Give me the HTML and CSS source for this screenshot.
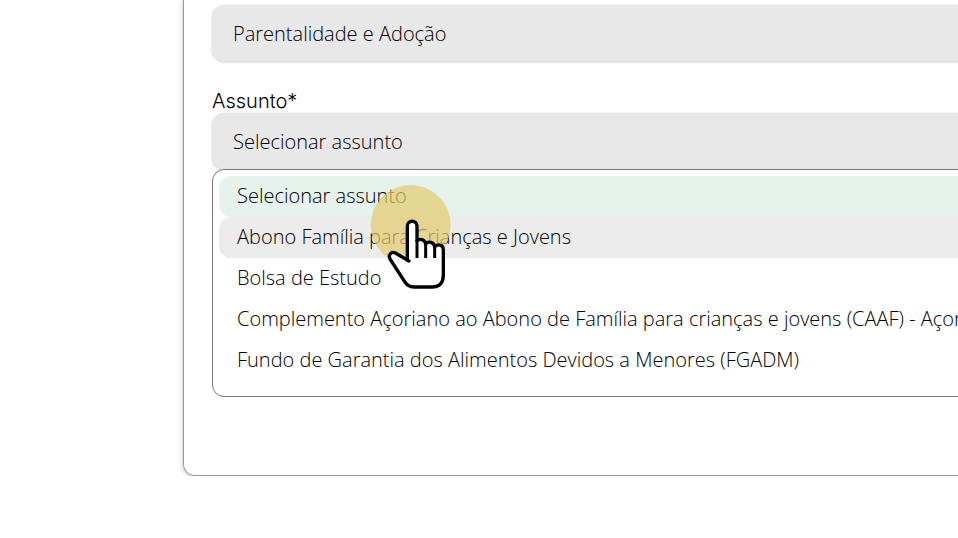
FILE: index.html
```
<!DOCTYPE html>
<html lang="pt">

<head>
    <meta charset="UTF-8">
    <meta name="viewport" content="width=device-width, initial-scale=1.0">
    <title>Assunto</title>
    <link rel="stylesheet" href="styles.css">
</head>

<body>
    <form class="panel">
        <select class="field" id="tema" aria-label="Tema">
            <option>Parentalidade e Adoção</option>
        </select>

        <label class="label" for="assunto">Assunto*</label>
        <select class="field" id="assunto">
            <option>Selecionar assunto</option>
        </select>

        <div class="options">
            <button type="button" class="option selected">Selecionar assunto</button>
            <button type="button" class="option hover">Abono Família para Crianças e Jovens</button>
            <button type="button" class="option">Bolsa de Estudo</button>
            <button type="button" class="option">Complemento Açoriano ao Abono de Família para crianças e jovens (CAAF) - Açores</button>
            <button type="button" class="option">Fundo de Garantia dos Alimentos Devidos a Menores (FGADM)</button>

            <!-- click marker with the hand pointer -->
            <svg class="pointer" width="110" height="125" viewBox="0 0 330 375" aria-hidden="true">
                <circle cx="152" cy="150" r="120" fill="#e4ca6e" fill-opacity="0.7" />
                <path d="M147 258 L106 234 C94 228 84 240 90 252 L132 317 Q143 336 162 336 H216 Q250 336 250 300 V224 C250 208 232 206 224 216 C222 200 204 198 197 207 C194 192 178 190 171 198 V153 C171 134 142 134 142 153 V256 Z" fill="#fff" stroke="#000" stroke-width="10" stroke-linejoin="round" />
                <path d="M171 195 V249 M197 205 V249 M224 214 V249" fill="none" stroke="#000" stroke-width="9" />
            </svg>
        </div>
    </form>
</body>

</html>
```
FILE: styles.css
```
body {
    margin: 0;
    overflow: hidden;
    background-color: #ffffff;
    font-family: "Open Sans", sans-serif;
}

/* the panel runs past the right edge of the window */
.panel {
    margin: 0 -48px 0 183px;
    padding: 5px 28px 78px;
    border: 1px solid #999;
    border-top: none;
    border-radius: 0 0 12px 12px;
    box-shadow: 0 1px 5px rgba(0, 0, 0, 0.25);
}

.field {
    display: block;
    width: 100%;
    height: 56px;
    padding: 0 21px;
    border: none;
    border-radius: 12px;
    background-color: #e8e8e8;
    box-shadow: 0 1px 3px rgba(0, 0, 0, 0.2);
    appearance: none;
    font-family: inherit;
    font-size: 20px;
    font-weight: 300;
    color: #000;
}

.label {
    display: block;
    margin-top: 28px;
    font-family: Inter, sans-serif;
    font-size: 20px;
    font-weight: 300;
    line-height: 24px;
    color: #000;
}

.options {
    position: relative;
    padding: 6px 6px 15px;
    border: 1px solid #777;
    border-radius: 12px;
    background-color: #ffffff;
}

.option {
    display: block;
    width: 100%;
    height: 41px;
    padding: 0 18px 2px;
    border: none;
    border-radius: 12px;
    background: none;
    font-family: inherit;
    font-size: 20px;
    font-weight: 300;
    text-align: left;
    white-space: nowrap;
    color: #000;
}

.selected {
    background-color: #e5f3ec;
}

.hover {
    background-color: #ececec;
}

.pointer {
    position: absolute;
    top: 5px;
    left: 147px;
    pointer-events: none;
}
```
